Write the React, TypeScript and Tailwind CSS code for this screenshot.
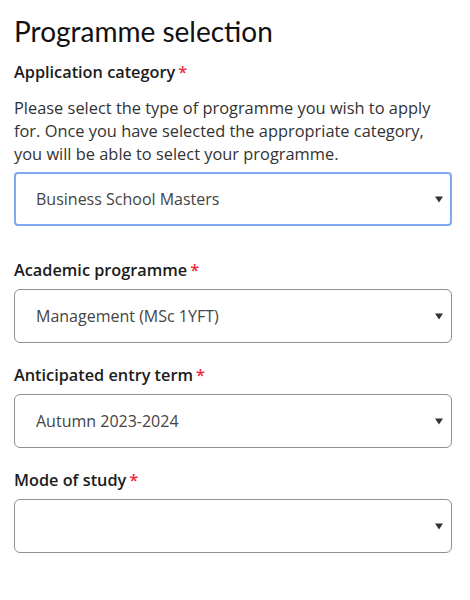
import React, { useState } from 'react';

type Field = {
    id: string;
    label: string;
    options: string[];
};

const fields: Field[] = [
    { id: 'academic', label: 'Academic programme', options: ['Management (MSc 1YFT)'] },
    { id: 'term', label: 'Anticipated entry term', options: ['Autumn 2023-2024'] },
    { id: 'mode', label: 'Mode of study', options: [''] },
];

const Arrow: React.FC = () => (
    <svg className="pointer-events-none absolute right-[9px] top-1/2 -translate-y-1/2" width="8" height="8" viewBox="0 0 8 8">
        <path d="M0 1.5 H8 L4 7.5 Z" fill="#333" />
    </svg>
);

const Label: React.FC<{ htmlFor: string; children: React.ReactNode }> = ({ htmlFor, children }) => (
    <label htmlFor={htmlFor} className="block text-[16.3px] font-semibold leading-[22px] text-[#1c1c1c]">
        {children}
        <span className="ml-[3px] text-[#ee2a3a]">*</span>
    </label>
);

const App: React.FC = () => {
    const [category, setCategory] = useState('Business School Masters');
    const [values, setValues] = useState<Record<string, string>>({
        academic: 'Management (MSc 1YFT)',
        term: 'Autumn 2023-2024',
        mode: '',
    });

    return (
        <div className="min-h-screen bg-white px-[14px] pt-[13px] font-['Open_Sans',sans-serif] text-[#333]">
            <h1 className="font-['Lato','Open_Sans',sans-serif] text-[28px] leading-[36px] text-[#111]">Programme selection</h1>

            <div className="mt-[12px]">
                <Label htmlFor="category">Application category</Label>
                <p className="mt-[13px] w-[438px] text-[16.4px] leading-[23px] text-[#333]">
                    Please select the type of programme you wish to apply for. Once you have selected the appropriate category, you will be able to select your programme.
                </p>
                <div className="relative mt-[7px] w-[438px]">
                    {/* focused field */}
                    <select
                        id="category"
                        value={category}
                        onChange={(e) => setCategory(e.target.value)}
                        className="block h-[54px] w-full appearance-none rounded-[4px] border-2 border-[#7fa9ee] bg-white pl-[20px] pr-[30px] text-[16px] text-[#444] outline-none"
                    >
                        <option>Business School Masters</option>
                    </select>
                    <Arrow />
                </div>
            </div>

            <div className="mt-[33px] flex flex-col gap-[21px]">
                {fields.map((f) => (
                    <div key={f.id}>
                        <Label htmlFor={f.id}>{f.label}</Label>
                        <div className="relative mt-[8px] w-[438px]">
                            <select
                                id={f.id}
                                value={values[f.id]}
                                onChange={(e) => setValues({ ...values, [f.id]: e.target.value })}
                                className="block h-[54px] w-full appearance-none rounded-[6px] border border-[#8f8f8f] bg-white pl-[21px] pr-[30px] text-[16px] text-[#444] outline-none"
                            >
                                {f.options.map((o) => (
                                    <option key={o} value={o}>{o}</option>
                                ))}
                            </select>
                            <Arrow />
                        </div>
                    </div>
                ))}
            </div>
        </div>
    );
};

export default App;
